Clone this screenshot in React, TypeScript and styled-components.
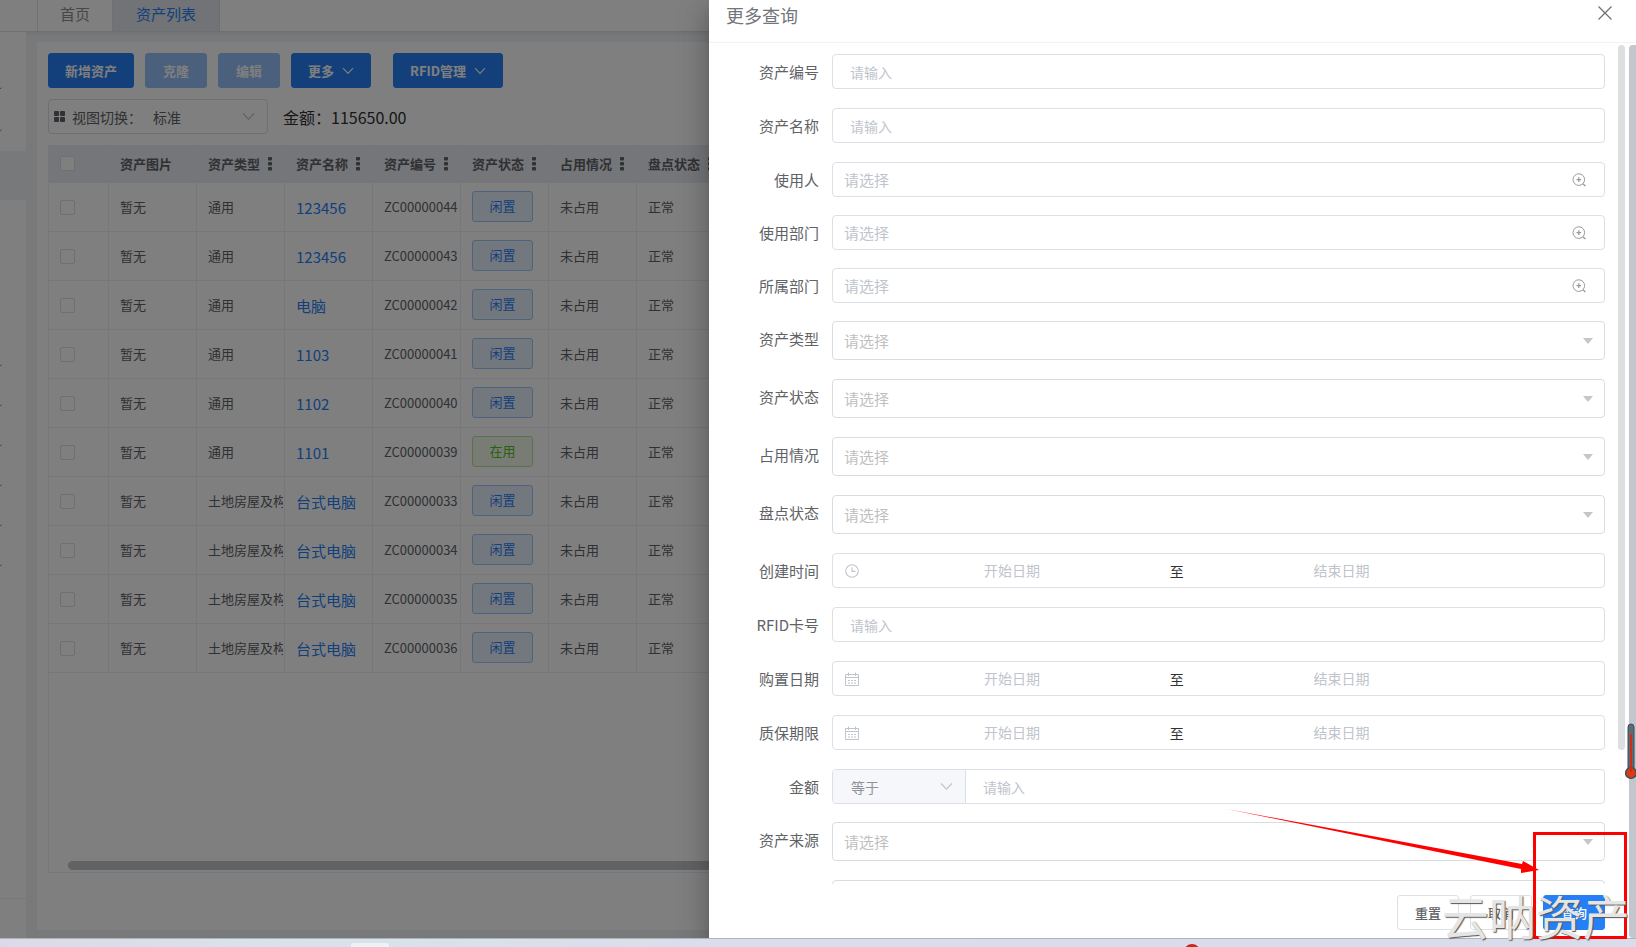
import React from "react";
import styled, { createGlobalStyle, css } from "styled-components";

const GlobalStyle = createGlobalStyle`
  *, *::before, *::after { box-sizing: border-box; }
  body { margin: 0; overflow: hidden; }
  body, button, input, select {
    font-family: "Noto Sans CJK SC", "Noto Sans", sans-serif;
  }
  button, select { cursor: pointer; }
`;

const Screen = styled.div`
  position: relative;
  display: flex;
  flex-direction: column;
  height: 100vh;
  overflow: hidden;
`;

const Workspace = styled.div`
  position: relative;
  flex: 1;
  min-height: 0;
  display: flex;
  flex-direction: column;
  overflow: hidden;
  background: #f0f2f5;
`;

const TabBar = styled.nav`
  display: flex;
  flex: none;
  height: 32px;
  padding-left: 37px;
  background: #fff;
  border-bottom: 1px solid #dcdfe6;
  box-shadow: 0 1px 3px rgba(0, 0, 0, 0.08);
`;

const Tab = styled.a<{ $active?: boolean }>`
  padding: 0 22px;
  border-left: 1px solid #e0e2e6;
  font-size: 15px;
  line-height: 28px;
  color: ${(p) => (p.$active ? "#2680f5" : "#8c8e92")};
  text-decoration: none;
  ${(p) =>
    p.$active &&
    css`
      padding: 0 23px;
      background: #e3e6ec;
      border-right: 1px solid #d8dce5;
    `}
`;

const Columns = styled.div`
  flex: 1;
  min-height: 0;
  display: flex;
`;

const Sidebar = styled.aside`
  flex: none;
  display: flex;
  flex-direction: column;
  width: 26px;
  padding-top: 35px;
  background: #fff;
`;

const MenuGroup = styled.ul<{ $item: number }>`
  margin: 0;
  padding: 0;
  list-style: none;
  li {
    display: flex;
    align-items: center;
    height: ${(p) => p.$item}px;
  }
`;

const ActiveItem = styled.div`
  height: 49px;
  margin-bottom: 145px;
  background: #f0f2f5;
`;

const SidebarFoot = styled.div`
  height: 40px;
  margin-top: auto;
  border-top: 1px solid #eceef2;
`;

const Card = styled.main`
  flex: 1;
  min-width: 0;
  display: flex;
  flex-direction: column;
  gap: 11px;
  margin: 10px 11px 8px;
  padding: 11px 11px 57px;
  background: #fff;
`;

const Button = styled.button<{ $kind?: "primary" | "plain"; $spaced?: boolean }>`
  display: flex;
  align-items: center;
  justify-content: center;
  gap: 8px;
  height: 35px;
  min-width: 62px;
  padding: 0 16px;
  border: 1px solid ${(p) => (p.$kind === "plain" ? "#dcdfe6" : "#2680f5")};
  border-radius: 3px;
  background: ${(p) => (p.$kind === "plain" ? "#fff" : "#2680f5")};
  color: ${(p) => (p.$kind === "plain" ? "#606266" : "#fff")};
  font-size: 13px;
  font-weight: 500;
  line-height: 18px;
  margin-right: ${(p) => (p.$spaced ? 11 : 0)}px;
  &:disabled {
    border-color: #94c0fa;
    background: #94c0fa;
    cursor: default;
  }
`;

const Toolbar = styled.div`
  display: flex;
  gap: 11px;
  ${Button} { font-weight: 700; }
`;

const ViewRow = styled.div`
  display: flex;
  align-items: center;
  gap: 15px;
`;

const ViewSwitch = styled.div`
  display: flex;
  align-items: center;
  gap: 7px;
  width: 220px;
  height: 35px;
  padding: 0 12px 0 5px;
  border: 1px solid #dcdfe6;
  border-radius: 4px;
  color: #606266;
  font-size: 14px;
  select {
    flex: 1;
    min-width: 0;
    margin-left: 4px;
    border: 0;
    outline: 0;
    appearance: none;
    background: transparent;
    color: #606266;
    font-size: 14px;
  }
`;

const Total = styled.span`
  color: #303133;
  font-size: 16px;
  line-height: 24px;
`;

const TableBox = styled.div`
  position: relative;
  flex: 1;
  min-height: 0;
  overflow: hidden;
  border: 1px solid #ebeef5;
  border-top: 0;
`;

const HScroll = styled.div`
  position: absolute;
  left: 19px;
  right: 200px;
  bottom: 2px;
  height: 9px;
  border-radius: 5px;
  background: #c3c5c9;
`;

const Table = styled.table`
  width: 100%;
  border-collapse: separate;
  border-spacing: 0;
  table-layout: fixed;
  color: #606266;
  font-size: 13px;
  th, td {
    height: 49px;
    padding: 0 0 0 11px;
    border-right: 1px solid #ebeef5;
    border-bottom: 1px solid #ebeef5;
    overflow: hidden;
    white-space: nowrap;
    text-align: left;
    line-height: 20px;
  }
  th {
    height: 38px;
    background: #e9ecf2;
    font-weight: 700;
  }
`;

const HeadCell = styled.span`
  display: flex;
  align-items: center;
  gap: 8px;
`;

const Clip = styled.span`
  display: block;
  margin-right: 1px;
  overflow: hidden;
`;

const AssetLink = styled.a`
  display: block;
  padding-top: 2px;
  color: #2680f5;
  font-size: 15px;
  line-height: 24px;
  text-decoration: none;
`;

const Check = styled.input`
  display: block;
  width: 15px;
  height: 15px;
  margin: 0;
  border: 1px solid #dcdfe6;
  border-radius: 2px;
  appearance: none;
  background: #fff;
`;

const Tag = styled.span<{ $green?: boolean }>`
  display: block;
  width: 61px;
  height: 31px;
  margin-bottom: 2px;
  border: 1px solid ${(p) => (p.$green ? "#b5e39a" : "#9cc6fb")};
  border-radius: 3px;
  background: ${(p) => (p.$green ? "#f0f9eb" : "#e6f0fd")};
  color: ${(p) => (p.$green ? "#56c022" : "#2680f5")};
  line-height: 28px;
  text-align: center;
`;

const Overlay = styled.div`
  position: absolute;
  inset: 0;
  display: grid;
  grid-template-columns: 709fr 927fr;
  background: rgba(0, 0, 0, 0.5);
`;

const Drawer = styled.section`
  position: relative;
  grid-column: 2;
  min-width: 0;
  min-height: 0;
  display: flex;
  flex-direction: column;
  background: #fff;
  box-shadow: 0 8px 10px -5px rgba(0, 0, 0, 0.2), 0 16px 24px 2px rgba(0, 0, 0, 0.14),
    0 6px 30px 5px rgba(0, 0, 0, 0.12);
`;

const DrawerHead = styled.header`
  flex: none;
  display: flex;
  align-items: flex-start;
  justify-content: space-between;
  height: 43px;
  padding: 0 23px 0 17px;
  border-bottom: 1px solid #f0f2f8;
  h2 {
    margin: 0;
    color: #72767b;
    font-size: 18px;
    font-weight: 400;
    line-height: 30px;
  }
`;

const CloseButton = styled.button`
  display: grid;
  place-items: center;
  width: 16px;
  height: 26px;
  padding: 0;
  border: 0;
  background: none;
`;

const DrawerBody = styled.form`
  flex: 1;
  min-height: 0;
  overflow: hidden;
  padding: 11px 31px 0 0;
`;

const Field = styled.div<{ $tight?: boolean }>`
  display: grid;
  grid-template-columns: 110px 1fr;
  column-gap: 13px;
  align-items: start;
  margin-bottom: ${(p) => (p.$tight ? 18 : 19)}px;
  & > label {
    color: #606266;
    font-size: 15px;
    line-height: 35px;
    text-align: right;
  }
`;

const Box = styled.div<{ $tall?: boolean }>`
  grid-column: 2;
  display: flex;
  align-items: center;
  min-width: 0;
  height: ${(p) => (p.$tall ? 39 : 35)}px;
  border: 1px solid ${(p) => (p.$tall ? "#d9dce1" : "#dcdfe6")};
  border-radius: 4px;
  overflow: hidden;
  background: #fff;
`;

const TextInput = styled.input<{ $picker?: boolean }>`
  flex: 1;
  min-width: 0;
  height: 100%;
  padding: 0 ${(p) => (p.$picker ? 11 : 17)}px;
  border: 0;
  outline: 0;
  background: none;
  font-size: ${(p) => (p.$picker ? 15 : 14)}px;
  &::placeholder { color: #c0c4cc; opacity: 1; }
`;

const PickButton = styled.button`
  display: grid;
  place-items: center;
  width: 14px;
  height: 33px;
  margin-right: 18px;
  padding: 0;
  border: 0;
  background: none;
`;

const Choice = styled.select`
  flex: 1;
  min-width: 0;
  height: 100%;
  padding: 0 11px;
  border: 0;
  outline: 0;
  appearance: none;
  background: none;
  color: #bfbfbf;
  font-size: 15px;
`;

const Caret = styled.span`
  width: 0;
  height: 0;
  margin-right: 11px;
  border: 5px solid transparent;
  border-top: 6px solid #c4c6ca;
  border-bottom: 0;
`;

const RangeBox = styled(Box)`
  padding: 0 11px;
  svg { flex: none; margin-right: 6px; }
  input {
    width: 39%;
    min-width: 0;
    padding: 0 0 2px;
    border: 0;
    outline: 0;
    background: none;
    font-size: 14px;
    text-align: center;
  }
  input::placeholder { color: #c0c4cc; opacity: 1; }
  span {
    width: 5%;
    color: #303133;
    font-size: 14px;
    line-height: 20px;
    text-align: center;
  }
`;

const Compare = styled.div`
  flex: none;
  display: flex;
  align-items: center;
  width: 133px;
  height: 100%;
  padding-right: 12px;
  border-right: 1px solid #dcdfe6;
  background: #f5f7fa;
  select {
    flex: 1;
    min-width: 0;
    padding: 0 18px;
    border: 0;
    outline: 0;
    appearance: none;
    background: none;
    color: #909399;
    font-size: 14px;
  }
`;

const DrawerFoot = styled.footer`
  flex: none;
  display: flex;
  justify-content: flex-end;
  gap: 11px;
  padding: 11px 31px 8px 0;
`;

const InnerThumb = styled.div`
  position: absolute;
  top: 45px;
  right: 11px;
  width: 7px;
  height: 705px;
  border-radius: 4px;
  background: #dddee0;
`;

const OuterThumb = styled.div`
  position: absolute;
  top: 45px;
  right: 0;
  bottom: 0;
  width: 7px;
  border-radius: 4px 0 0 4px;
  background: #c3c6cc;
`;

const Thermometer = styled.svg`
  position: absolute;
  top: 723px;
  right: 0;
`;

const Taskbar = styled.footer`
  position: relative;
  flex: none;
  height: 9px;
  overflow: hidden;
  border-top: 1px solid #b0b3bd;
  background: linear-gradient(90deg, #dcdae8 0%, #d9e1ea 14%, #d8e2ea 24%, #dadeea 42%, #d9dcea 100%);
`;

const TaskWindow = styled.div`
  position: absolute;
  left: 351px;
  top: 4px;
  width: 38px;
  height: 20px;
  border-radius: 3px;
  background: #eef2f6;
`;

const TaskDot = styled.div`
  position: absolute;
  left: 1184px;
  top: 5px;
  width: 16px;
  height: 16px;
  border-radius: 50%;
  background: #c8281e;
`;

const Marker = styled.div`
  position: absolute;
  right: 9px;
  bottom: 8px;
  width: 94px;
  height: 107px;
  border: 3px solid #f00;
`;

const Arrow = styled.svg`
  position: absolute;
  right: 97px;
  bottom: 72px;
`;

const Watermark = styled.div`
  position: absolute;
  right: 6px;
  bottom: 8px;
  color: #e5e5e5;
  font-family: "Noto Sans CJK SC", sans-serif;
  font-size: 47px;
  line-height: 48px;
  text-shadow: 1px 1px 1px #555;
  pointer-events: none;
`;

const Chevron = ({ color = "#c0c4cc", size = 12 }: { color?: string; size?: number }) => (
  <svg width={size} height={size} viewBox="0 0 12 12" fill="none" stroke={color} strokeWidth="1.1">
    <path d="M1 3.2 6 8.4 11 3.2" />
  </svg>
);

const Dots = () => (
  <svg width="4" height="14" fill="#606266">
    <rect y="0" width="4" height="3.6" rx="1" />
    <rect y="5" width="4" height="3.6" rx="1" />
    <rect y="10" width="4" height="3.6" rx="1" />
  </svg>
);

const ZoomIn = () => (
  <svg width="14" height="14" viewBox="0 0 14 14" fill="none" stroke="#97999c">
    <circle cx="6.8" cy="6.6" r="5.8" />
    <path d="M4.5 6.6h4.6M6.8 4.3v4.6" strokeWidth="1.3" />
    <path d="M10.9 10.7 13.4 13" strokeWidth="1.3" />
  </svg>
);

const Clock = () => (
  <svg width="16" height="14" viewBox="0 0 16 14" fill="none" stroke="#c0c4cc" strokeWidth="1.1">
    <circle cx="8" cy="7" r="6.3" />
    <path d="M8 3.2V7.4h3.4" />
  </svg>
);

const Calendar = () => (
  <svg width="16" height="14" viewBox="0 0 16 14" fill="none" stroke="#c0c4cc">
    <path d="M1.5 2.5h13v11h-13zM1.5 5.5h13M4.5 0.5v3.4M11.5 0.5v3.4" />
    <path d="M4 8.5h2M7 8.5h2M10 8.5h2M4 11h2M7 11h2M10 11h2" />
  </svg>
);

const Tick = () => (
  <svg width="3" height="3" fill="none" stroke="#85888e">
    <path d="M0 2 1.6 .6" />
  </svg>
);

const heads = ["资产图片", "资产类型", "资产名称", "资产编号", "资产状态", "占用情况", "盘点状态"];

const assets: [string, string, string, string][] = [
  ["通用", "123456", "ZC00000044", "闲置"],
  ["通用", "123456", "ZC00000043", "闲置"],
  ["通用", "电脑", "ZC00000042", "闲置"],
  ["通用", "1103", "ZC00000041", "闲置"],
  ["通用", "1102", "ZC00000040", "闲置"],
  ["通用", "1101", "ZC00000039", "在用"],
  ["土地房屋及构筑物", "台式电脑", "ZC00000033", "闲置"],
  ["土地房屋及构筑物", "台式电脑", "ZC00000034", "闲置"],
  ["土地房屋及构筑物", "台式电脑", "ZC00000035", "闲置"],
  ["土地房屋及构筑物", "台式电脑", "ZC00000036", "闲置"],
];

type Kind = "text" | "picker" | "select" | "time" | "date" | "amount";

const fields: { id: string; label: string; kind: Kind }[] = [
  { id: "code", label: "资产编号", kind: "text" },
  { id: "name", label: "资产名称", kind: "text" },
  { id: "user", label: "使用人", kind: "picker" },
  { id: "userDept", label: "使用部门", kind: "picker" },
  { id: "ownerDept", label: "所属部门", kind: "picker" },
  { id: "type", label: "资产类型", kind: "select" },
  { id: "status", label: "资产状态", kind: "select" },
  { id: "occupied", label: "占用情况", kind: "select" },
  { id: "stock", label: "盘点状态", kind: "select" },
  { id: "created", label: "创建时间", kind: "time" },
  { id: "rfid", label: "RFID卡号", kind: "text" },
  { id: "bought", label: "购置日期", kind: "date" },
  { id: "warranty", label: "质保期限", kind: "date" },
  { id: "amount", label: "金额", kind: "amount" },
  { id: "source", label: "资产来源", kind: "select" },
];

function Control({ id, kind, label }: { id: string; kind: Kind; label: string }) {
  switch (kind) {
    case "text":
      return (
        <Box>
          <TextInput id={id} placeholder="请输入" />
        </Box>
      );
    case "picker":
      return (
        <Box>
          <TextInput id={id} $picker readOnly placeholder="请选择" />
          <PickButton type="button" aria-label={label}>
            <ZoomIn />
          </PickButton>
        </Box>
      );
    case "select":
      return (
        <Box $tall>
          <Choice id={id} defaultValue="">
            <option value="">请选择</option>
          </Choice>
          <Caret />
        </Box>
      );
    case "amount":
      return (
        <Box>
          <Compare>
            <select aria-label="条件">
              <option>等于</option>
            </select>
            <Chevron size={13} />
          </Compare>
          <TextInput id={id} placeholder="请输入" />
        </Box>
      );
    default:
      return (
        <RangeBox>
          {kind === "time" ? <Clock /> : <Calendar />}
          <input id={id} placeholder="开始日期" />
          <span>至</span>
          <input aria-label={label} placeholder="结束日期" />
        </RangeBox>
      );
  }
}

export default function App() {
  return (
    <Screen>
      <GlobalStyle />
      <Workspace>
        <TabBar>
          <Tab href="#home">首页</Tab>
          <Tab href="#assets" $active>
            资产列表
          </Tab>
        </TabBar>
        <Columns>
          <Sidebar>
            <MenuGroup $item={42}>
              {[0, 1].map((i) => (
                <li key={i}>
                  <Tick />
                </li>
              ))}
            </MenuGroup>
            <ActiveItem />
            <MenuGroup $item={40}>
              {[0, 1, 2, 3, 4, 5].map((i) => (
                <li key={i}>
                  <Tick />
                </li>
              ))}
            </MenuGroup>
            <SidebarFoot />
          </Sidebar>
          <Card>
            <Toolbar>
              <Button>新增资产</Button>
              <Button disabled>克隆</Button>
              <Button disabled>编辑</Button>
              <Button $spaced>
                更多
                <Chevron color="#fff" />
              </Button>
              <Button>
                RFID管理
                <Chevron color="#fff" />
              </Button>
            </Toolbar>
            <ViewRow>
              <ViewSwitch>
                <svg width="11" height="11" fill="#606266">
                  <rect width="5" height="5" rx="1" />
                  <rect x="6" width="5" height="5" rx="1" />
                  <rect y="6" width="5" height="5" rx="1" />
                  <rect x="6" y="6" width="5" height="5" rx="1" />
                </svg>
                <label htmlFor="view">视图切换：</label>
                <select id="view">
                  <option>标准</option>
                </select>
                <Chevron size={13} />
              </ViewSwitch>
              <Total>金额：115650.00</Total>
            </ViewRow>
            <TableBox>
              <Table>
                <colgroup>
                  <col style={{ width: 60 }} />
                  {heads.map((h) => (
                    <col key={h} style={{ width: 88 }} />
                  ))}
                  <col />
                </colgroup>
                <thead>
                  <tr>
                    <th>
                      <Check type="checkbox" aria-label="全选" />
                    </th>
                    {heads.map((h, i) => (
                      <th key={h}>
                        <HeadCell>
                          {h}
                          {i > 0 && <Dots />}
                        </HeadCell>
                      </th>
                    ))}
                    <th />
                  </tr>
                </thead>
                <tbody>
                  {assets.map(([type, name, code, status]) => (
                    <tr key={code}>
                      <td>
                        <Check type="checkbox" aria-label={code} />
                      </td>
                      <td>暂无</td>
                      <td>
                        <Clip>{type}</Clip>
                      </td>
                      <td>
                        <AssetLink href={`#${code}`}>{name}</AssetLink>
                      </td>
                      <td>{code}</td>
                      <td>
                        <Tag $green={status === "在用"}>{status}</Tag>
                      </td>
                      <td>未占用</td>
                      <td>正常</td>
                      <td />
                    </tr>
                  ))}
                </tbody>
              </Table>
              <HScroll />
            </TableBox>
          </Card>
        </Columns>

        <Overlay>
          <Drawer role="dialog" aria-labelledby="drawer-title">
            <DrawerHead>
              <h2 id="drawer-title">更多查询</h2>
              <CloseButton type="button" aria-label="关闭">
                <svg width="14" height="14" fill="none" stroke="#6f7277" strokeWidth="1.3">
                  <path d="M.5.5 13.5 13.5M13.5.5.5 13.5" />
                </svg>
              </CloseButton>
            </DrawerHead>
            <DrawerBody id="query">
              {fields.map(({ id, label, kind }) => (
                <Field key={id} $tight={kind === "picker" || kind === "amount"}>
                  <label htmlFor={id}>{label}</label>
                  <Control id={id} kind={kind} label={label} />
                </Field>
              ))}
              <Field>
                <Box $tall />
              </Field>
            </DrawerBody>
            <DrawerFoot>
              <Button $kind="plain" type="reset" form="query">
                重置
              </Button>
              <Button $kind="plain" type="button">
                取消
              </Button>
              <Button type="button">查询</Button>
            </DrawerFoot>
            <InnerThumb />
            <OuterThumb />
            <Thermometer width="11" height="57" viewBox="0 0 11 57">
              <rect x="3" y="1" width="6" height="48" rx="3" fill="#5d6b75" stroke="#35505c" />
              <circle cx="6" cy="50" r="5.4" fill="#dc3a14" stroke="#35505c" strokeWidth="1.4" />
              <path d="M6 11v38" stroke="#d42a14" strokeWidth="2" />
            </Thermometer>
          </Drawer>
        </Overlay>
      </Workspace>

      <Taskbar>
        <TaskWindow />
        <TaskDot />
      </Taskbar>

      <Marker />
      <Arrow width="312" height="67" viewBox="0 0 312 67" fill="#f00">
        <path d="M0 1 295 56 296 53 312 62 294 65 294 61Z" />
      </Arrow>
      <Watermark>云呐资产</Watermark>
    </Screen>
  );
}
